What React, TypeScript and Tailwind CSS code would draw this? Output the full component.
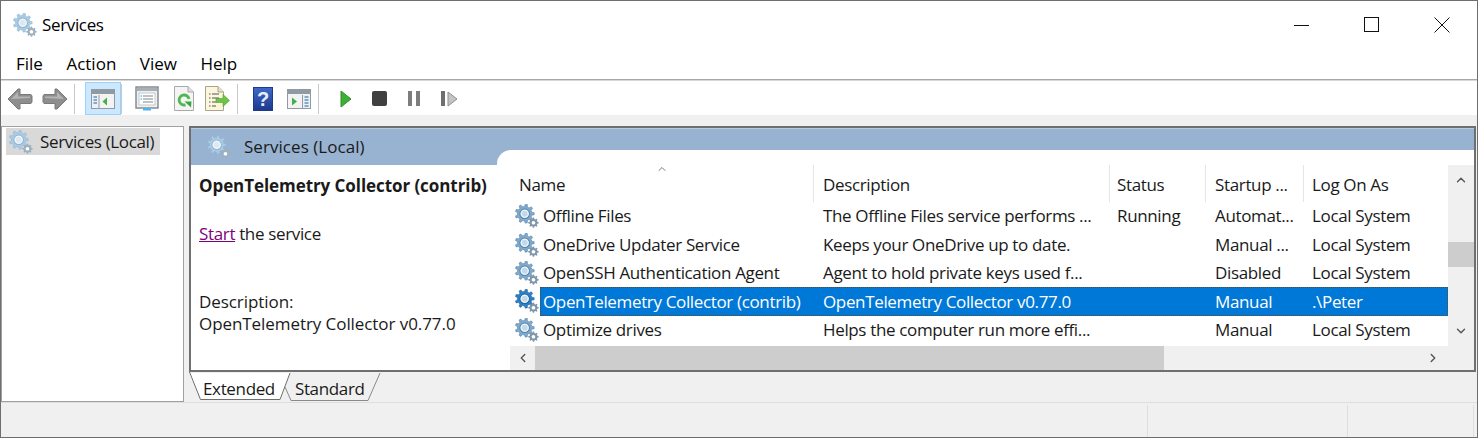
import { ChevronDown, ChevronLeft, ChevronRight, ChevronUp } from "lucide-react";

function gearPath(cx: number, cy: number, r: number, teeth: number) {
  const pts: string[] = [];
  const step = (Math.PI * 2) / teeth;
  for (let i = 0; i < teeth; i++) {
    const a = i * step;
    const p = [
      [a - step * 0.3, r * 0.76],
      [a - step * 0.16, r],
      [a + step * 0.16, r],
      [a + step * 0.3, r * 0.76],
    ];
    p.forEach(([ang, rad]) => {
      pts.push(`${(cx + Math.cos(ang) * rad).toFixed(2)} ${(cy + Math.sin(ang) * rad).toFixed(2)}`);
    });
  }
  return "M" + pts.join("L") + "Z";
}

function Gears({ dark = false, pale = false }: { dark?: boolean; pale?: boolean }) {
  const main = dark ? "#2f7fc4" : pale ? "#a9cbe4" : "#7fa9d0";
  const edge = dark ? "#1c5f9f" : pale ? "#8fb4cf" : "#55829f";
  return (
    <svg width="24" height="24" viewBox="0 0 26 26" className="shrink-0">
      <path d={gearPath(10.5, 10.5, 10.3, 9)} fill={main} stroke={edge} strokeWidth="0.6" />
      <circle cx="10.5" cy="10.5" r="5.2" fill="#f2f7fb" stroke={edge} strokeWidth="1.1" />
      <circle cx="10.5" cy="10.5" r="3.2" fill={pale ? "#dbe9f4" : "#bfd9ee"} />
      <path d={gearPath(20, 20.3, 5.6, 8)} fill={pale ? "#9db0bd" : "#7e97aa"} />
      <circle cx="20" cy="20.3" r="2" fill="#ffffff" />
    </svg>
  );
}

function Arrow({ flip = false }: { flip?: boolean }) {
  return (
    <svg width="26" height="24" viewBox="0 0 26 24" className={flip ? "-scale-x-100" : ""}>
      <path d="M1 12 L11 2 L13 2 L13 7.5 L24 7.5 L25 9 L25 15 L24 16.5 L13 16.5 L13 22 L11 22 Z" fill="#8e8e8e" stroke="#7a7a7a" strokeWidth="1" />
      <path d="M4 12 L11 5 L11 9.5 L23 9.5 L23 11 L4 12 Z" fill="#b4b4b4" />
    </svg>
  );
}

function WindowIcon() {
  return (
    <svg width="24" height="20" viewBox="0 0 24 20">
      <rect x="0.5" y="0.5" width="23" height="19" fill="#f3f3f3" stroke="#8f9aa3" />
      <rect x="1" y="1" width="22" height="4" fill="#8f9aa3" />
      <rect x="1" y="6" width="6" height="13" fill="#e8f1f8" />
      <path d="M2.5 8h3.5M2.5 11h3.5M2.5 14h3.5" stroke="#6a8fb3" strokeWidth="1.6" />
      <path d="M8 6v13" stroke="#8f9aa3" />
      <path d="M16 8.5 L11.5 12.5 L16 16.5 Z" fill="#3fb14a" />
    </svg>
  );
}

function WindowIconFlip() {
  return (
    <svg width="24" height="20" viewBox="0 0 24 20">
      <rect x="0.5" y="0.5" width="23" height="19" fill="#f3f3f3" stroke="#8f9aa3" />
      <rect x="1" y="1" width="22" height="4" fill="#8f9aa3" />
      <rect x="16" y="6" width="7" height="13" fill="#e8f1f8" />
      <path d="M17.5 8h4M17.5 11h4M17.5 14h4M17.5 17h4" stroke="#6a8fb3" strokeWidth="1.6" />
      <path d="M15.5 6v13" stroke="#8f9aa3" />
      <path d="M5 8.5 L10 12.5 L5 16.5 Z" fill="#3fb14a" />
    </svg>
  );
}

function PropsIcon() {
  return (
    <svg width="24" height="25" viewBox="0 0 24 25">
      <rect x="1" y="1" width="22" height="21" fill="#eef0f2" stroke="#7d858c" strokeWidth="1.4" />
      <rect x="2" y="2" width="20" height="3" fill="#a8b0b7" />
      <rect x="4" y="7" width="16" height="12" fill="#ffffff" stroke="#c3c9ce" />
      <path d="M8 10h10M8 13h10M8 16h10" stroke="#7d858c" />
      <path d="M5.5 10h1.5M5.5 13h1.5" stroke="#2f9be0" />
      <rect x="8" y="22" width="8" height="2.5" fill="#4fb5ea" />
    </svg>
  );
}

function RefreshIcon() {
  return (
    <svg width="20" height="25" viewBox="0 0 20 25">
      <path d="M0.5 0.5 H14 L19.5 6 V24.5 H0.5 Z" fill="#f4f4f4" stroke="#a9a9a9" />
      <path d="M14 0.5 V6 H19.5" fill="#dedede" stroke="#a9a9a9" />
      <path d="M15 13 A5 5 0 1 0 11.5 18.8" fill="none" stroke="#4cb84f" strokeWidth="2.8" />
      <path d="M10.5 15.5 L17.5 15.5 L17 21.5 Z" fill="#35a93f" />
    </svg>
  );
}

function ExportIcon() {
  return (
    <svg width="25" height="25" viewBox="0 0 25 25">
      <path d="M0.5 0.5 H13 L18.5 6 V24.5 H0.5 Z" fill="#fbf6dc" stroke="#a9a48c" />
      <path d="M13 0.5 V6 H18.5" fill="#e6e1c6" stroke="#a9a48c" />
      <path d="M4 8h1.5M7 8h7M4 12h1.5M7 12h7M4 16h1.5M7 16h4M4 20h1.5M7 20h4" stroke="#555555" />
      <path d="M11 12.5 H18 V8.5 L24.5 14.5 L18 20.5 V16.5 H11 Z" fill="#6cc644" stroke="#4f9e32" strokeWidth="0.6" />
    </svg>
  );
}

function HelpIcon() {
  return (
    <div className="w-[20px] h-[24px] bg-gradient-to-b from-[#3f68c9] to-[#1d3a8c] border border-[#1d3a8c] flex items-center justify-center font-bold text-[#e8eefc] text-[20px] leading-none font-['Liberation_Sans',sans-serif]">
      ?
    </div>
  );
}

function Sep() {
  return <div className="w-px h-[30px] bg-[#c8c8c8] shrink-0" />;
}

const rows = [
  { name: "Offline Files", desc: "The Offline Files service performs ...", status: "Running", startup: "Automat...", log: "Local System" },
  { name: "OneDrive Updater Service", desc: "Keeps your OneDrive up to date.", status: "", startup: "Manual ...", log: "Local System" },
  { name: "OpenSSH Authentication Agent", desc: "Agent to hold private keys used f...", status: "", startup: "Disabled", log: "Local System" },
  { name: "OpenTelemetry Collector (contrib)", desc: "OpenTelemetry Collector v0.77.0", status: "", startup: "Manual", log: ".\\Peter", selected: true },
  { name: "Optimize drives", desc: "Helps the computer run more effi...", status: "", startup: "Manual", log: "Local System" },
];

export default function App() {
  return (
    <div className="w-[1478px] h-[438px] overflow-hidden flex flex-col bg-[#f0f0f0] border border-[#6e6e6e] text-[17px] text-[#1a1a1a] font-['Open_Sans',sans-serif] tracking-[-0.35px]">
      {/* Title bar */}
      <div className="h-[45px] bg-white flex items-center shrink-0 pl-[12px] pt-[2px]">
        <Gears pale />
        <span className="ml-[5px] text-black">Services</span>
        <div className="ml-auto flex items-center">
          <svg width="16" height="16" viewBox="0 0 16 16" className="mr-[54px]">
            <path d="M0 8.5h15" stroke="#111" />
          </svg>
          <svg width="16" height="16" viewBox="0 0 16 16" className="mr-[54px]">
            <rect x="0.5" y="0.5" width="14" height="14" fill="none" stroke="#111" />
          </svg>
          <svg width="16" height="16" viewBox="0 0 16 16" className="mr-[27px]">
            <path d="M0.5 0.5L15.5 15.5M15.5 0.5L0.5 15.5" stroke="#111" />
          </svg>
        </div>
      </div>

      {/* Menu */}
      <div className="h-[34px] bg-white flex items-center shrink-0 pl-[15px] pt-[2px] gap-[23.5px] border-b border-[#a8a8a8] text-black tracking-normal">
        <span>File</span>
        <span>Action</span>
        <span>View</span>
        <span>Help</span>
      </div>

      {/* Toolbar */}
      <div className="h-[35px] bg-white flex items-center shrink-0 border-t border-[#d8d8d8] pl-[6px] pt-[1px]">
        <Arrow />
        <div className="w-[9px]" />
        <Arrow flip />
        <div className="w-[6px]" />
        <Sep />
        <div className="ml-[10px] w-[36px] h-[33px] bg-[#cce8ff] border border-[#99d1ff] flex items-center justify-center">
          <WindowIcon />
        </div>
        <Sep />
        <div className="ml-[13px]"><PropsIcon /></div>
        <div className="ml-[15px]"><RefreshIcon /></div>
        <div className="ml-[11px]"><ExportIcon /></div>
        <div className="w-[7px]" />
        <Sep />
        <div className="ml-[15px]"><HelpIcon /></div>
        <div className="ml-[14px]"><WindowIconFlip /></div>
        <div className="w-[7px]" />
        <Sep />
        <svg width="12" height="18" viewBox="0 0 12 18" className="ml-[21px]">
          <path d="M1 1 L11 9 L1 17 Z" fill="#3cb034" stroke="#2c8f27" />
        </svg>
        <div className="ml-[20px] w-[15px] h-[15px] bg-[#404040] rounded-[2px]" />
        <div className="ml-[21px] flex gap-[4px]">
          <div className="w-[4px] h-[15px] bg-[#7d7d7d]" />
          <div className="w-[4px] h-[15px] bg-[#7d7d7d]" />
        </div>
        <div className="ml-[21px] flex items-center gap-[2px]">
          <div className="w-[4px] h-[15px] bg-[#6f6f6f]" />
          <svg width="11" height="16" viewBox="0 0 11 16">
            <path d="M1 1 L10 8 L1 15 Z" fill="#c4c4c4" stroke="#8f8f8f" />
          </svg>
        </div>
      </div>

      {/* Body */}
      <div className="flex-1 flex min-h-0 pt-[11px] pr-[1px] gap-[5px]">
        {/* Tree */}
        <div className="w-[183px] h-[276px] bg-white border border-[#a0a0a0] shrink-0 pl-[4px] pt-[1px]">
          <div className="h-[27px] w-[154px] bg-[#d9d9d9] flex items-center pl-[3px] pt-[1px] gap-[7px]">
            <Gears pale />
            <span>Services (Local)</span>
          </div>
        </div>

        {/* Right side */}
        <div className="flex-1 min-w-0 flex flex-col">
          <div className="h-[246px] border-2 border-[#6f6f6f] bg-white flex flex-col overflow-hidden">
            <div className="h-[37px] bg-[#98b3d1] flex items-center pl-[16px] gap-[13px] shrink-0 border-t border-[#b8cade]">
              <Gears pale />
              <span className="tracking-[0.05px]">Services (Local)</span>
            </div>
            <div className="flex-1 flex min-h-0">
              {/* Extended info */}
              <div className="w-[319px] shrink-0 pl-[8px] pt-[8px]">
                <div className="font-bold tracking-[-0.07px] whitespace-nowrap">OpenTelemetry Collector (contrib)</div>
                <div className="mt-[22px]">
                  <span className="text-[#800080] underline">Start</span> the service
                </div>
                <div className="mt-[45px] leading-[22px] tracking-[-0.07px]">
                  <div>Description:</div>
                  <div className="whitespace-nowrap">OpenTelemetry Collector v0.77.0</div>
                </div>
              </div>

              {/* List */}
              <div className="flex-1 min-w-0 -mt-[15px] flex flex-col relative">
                <div className="h-[15px] bg-white rounded-tl-[14px] -ml-[13px] shrink-0" />
                <div className="flex-1 flex min-h-0">
                  <div className="flex-1 min-w-0 flex flex-col">
                    <div className="h-[37px] flex shrink-0 relative">
                      <div className="w-[304px] pl-[9px] pt-[3px] flex items-center border-r border-[#e5e5e5]">Name</div>
                      <ChevronUp className="absolute left-[146px] top-[-2px] text-[#777]" size={12} />
                      <div className="w-[296px] pl-[9px] pt-[3px] flex items-center border-r border-[#e5e5e5]">Description</div>
                      <div className="w-[96px] pl-[7px] pt-[3px] flex items-center border-r border-[#e5e5e5]">Status</div>
                      <div className="w-[98px] pl-[9px] pt-[3px] flex items-center border-r border-[#e5e5e5]">Startup ...</div>
                      <div className="pl-[8px] pt-[3px] flex items-center">Log On As</div>
                    </div>
                    {rows.map((r) => (
                      <div key={r.name} className="h-[28.4px] flex items-center shrink-0">
                        <div className="w-[30px] pl-[5px] shrink-0 flex items-center">
                          <Gears dark={r.selected} />
                        </div>
                        <div className={`flex-1 h-full flex items-center whitespace-nowrap ${r.selected ? "bg-[#0078d7] text-white outline-1 outline-dotted -outline-offset-1 outline-[#5a4a2a]" : ""}`}>
                          <div className="w-[274px] pl-[3px]">{r.name}</div>
                          <div className="w-[296px] pl-[9px]">{r.desc}</div>
                          <div className="w-[96px] pl-[7px]">{r.status}</div>
                          <div className="w-[98px] pl-[9px]">{r.startup}</div>
                          <div className="pl-[8px]">{r.log}</div>
                        </div>
                      </div>
                    ))}
                  </div>
                  {/* Vertical scrollbar */}
                  <div className="w-[26px] bg-[#f0f0f0] shrink-0 flex flex-col items-center text-[#555]">
                    <ChevronUp size={14} className="mt-[8px]" strokeWidth={2.4} />
                    <div className="w-full h-[25px] bg-[#cdcdcd] mt-[55px]" />
                    <ChevronDown size={14} className="mt-[57px]" strokeWidth={2.4} />
                  </div>
                </div>
                {/* Horizontal scrollbar */}
                <div className="h-[24px] bg-[#f0f0f0] shrink-0 flex items-center text-[#555]">
                  <div className="w-[25px] flex justify-center"><ChevronLeft size={14} strokeWidth={2.4} /></div>
                  <div className="w-[629px] h-full bg-[#cdcdcd]" />
                  <div className="ml-auto mr-[34px] w-[14px] flex justify-center"><ChevronRight size={14} strokeWidth={2.4} /></div>
                </div>
              </div>
            </div>
          </div>

          {/* Tabs */}
          <div className="h-[30px] flex items-center relative pl-[14px] pt-[4px] gap-[20px]">
            <svg width="200" height="30" viewBox="0 0 200 30" className="absolute left-0 top-0">
              <path d="M96 15 L102 28.5 L179 28.5 L191 1" fill="#f0f0f0" stroke="#8a8a8a" />
              <path d="M0.5 1 L11.5 27.5 L91 27.5 L101 1 Z" fill="#ffffff" />
              <path d="M0.5 0 L11.5 27.5 L91 27.5 L101 1" fill="none" stroke="#6f6f6f" />
            </svg>
            <span className="relative">Extended</span>
            <span className="relative">Standard</span>
          </div>
        </div>
      </div>

      {/* Status bar */}
      <div className="h-[35px] border-t border-[#dedede] shrink-0 flex justify-end">
        <div className="w-[200px] border-l border-[#dedede] mt-[2px]" />
        <div className="w-[126px] border-l border-[#dedede] mt-[2px]" />
        <div className="w-[4px] border-l border-[#dedede] mt-[2px]" />
      </div>
    </div>
  );
}
